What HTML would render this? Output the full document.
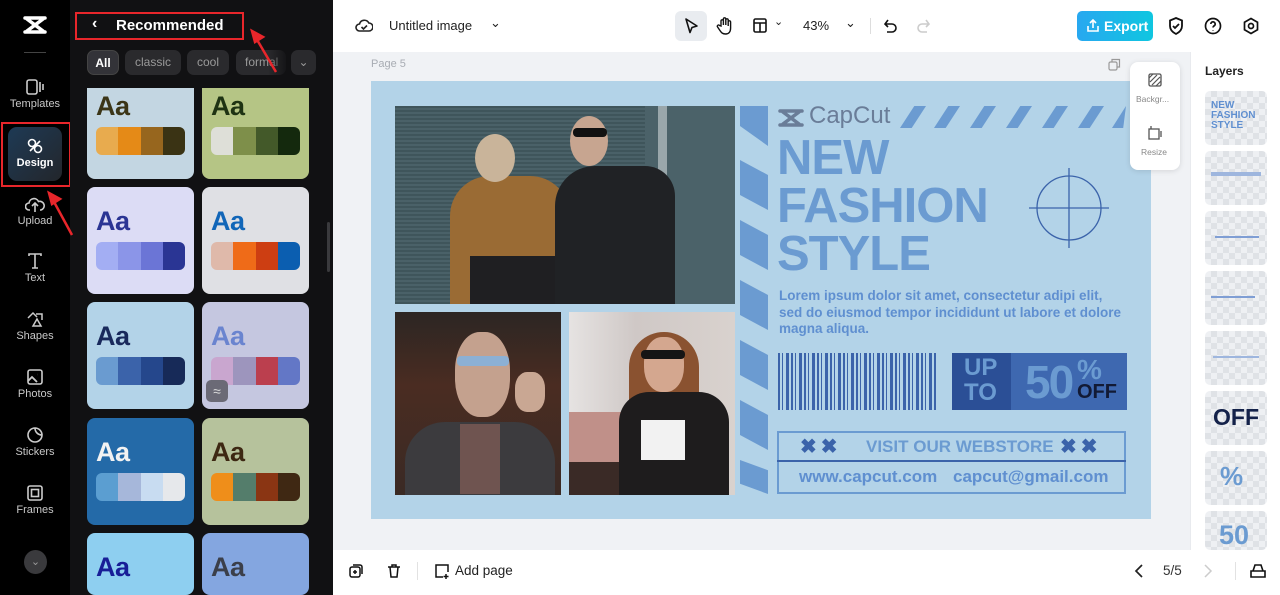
<!DOCTYPE html>
<html><head><meta charset="utf-8"><style>
*{margin:0;padding:0;box-sizing:border-box}
html,body{width:1280px;height:595px;overflow:hidden}
body{font-family:"Liberation Sans",sans-serif;background:#fff;position:relative}
.a{position:absolute}
.rail{left:0;top:0;width:70px;height:595px;background:#000}
.panel{left:70px;top:0;width:263px;height:595px;background:#111113}
.ri{position:absolute;left:0;width:70px;text-align:center;color:#c8c8c8;font-size:11px}
.ri svg{display:block;margin:0 auto 2px}
.chip{position:absolute;top:50px;height:25px;border-radius:7px;background:#2a2a2d;color:#9a9a9a;font-size:12px;line-height:25px;text-align:center}
.card{position:absolute;width:107px;height:107px;border-radius:8px;overflow:hidden}
.card .aa{position:absolute;left:9px;top:19px;font-size:27px;font-weight:bold;letter-spacing:-0.5px}
.card .pal{position:absolute;left:9px;top:55px;width:89px;height:28px;border-radius:6px;overflow:hidden;display:flex}
.card .pal i{flex:1}
.tb{color:#222;font-size:13px}
.stripeV{position:absolute;left:740px;width:28px;height:50px;background:#6b9bd1;clip-path:polygon(0 0,100% 30%,100% 100%,0 70%)}
.stripeT{position:absolute;top:106px;width:26px;height:22px;background:#6b9bd1;clip-path:polygon(55% 0,100% 0,45% 100%,0 100%)}
.lay{position:absolute;left:1205px;width:62px;height:54px;border-radius:5px;background-color:#eef0f3;background-image:linear-gradient(45deg,#dfe2e6 25%,transparent 25%,transparent 75%,#dfe2e6 75%),linear-gradient(45deg,#dfe2e6 25%,transparent 25%,transparent 75%,#dfe2e6 75%);background-size:12px 12px;background-position:0 0,6px 6px;overflow:hidden}
</style></head><body>

<div class="a rail"></div>
<svg class="a" style="left:22px;top:14px" width="26" height="22" viewBox="0 0 26 22"><path d="M3 4h20M3 18h20M5 5l16 12M21 5L5 17" stroke="#fff" stroke-width="3.5" fill="none" stroke-linecap="round"/></svg>
<div class="a" style="left:24px;top:52px;width:22px;height:1px;background:#444"></div>
<div class="ri" style="top:78px"><svg width="20" height="18" viewBox="0 0 20 18"><rect x="2" y="2" width="10" height="14" rx="2" stroke="#ccc" stroke-width="1.6" fill="none"/><path d="M15 4v10M18 6v6" stroke="#ccc" stroke-width="1.6"/></svg>Templates</div>
<div class="a" style="left:8px;top:127px;width:54px;height:54px;border-radius:9px;background:linear-gradient(135deg,#1e3a55,#23262b)"></div>
<div class="a" style="left:1px;top:122px;width:70px;height:65px;border:2px solid #e8262b"></div>
<div class="ri" style="top:137px;color:#fff;font-weight:bold"><svg width="18" height="18" viewBox="0 0 18 18"><circle cx="6" cy="6" r="3.5" stroke="#fff" stroke-width="1.6" fill="none"/><circle cx="12" cy="12" r="3.5" stroke="#fff" stroke-width="1.6" fill="none"/><path d="M4 14L14 4" stroke="#fff" stroke-width="1.6"/></svg>Design</div>
<div class="ri" style="top:196px"><svg width="20" height="17" viewBox="0 0 20 17"><path d="M5 14H4a3.5 3.5 0 010-7 5 5 0 019.5-1.5A4 4 0 0116 14h-1M10 16V8M7 10l3-3 3 3" stroke="#ccc" stroke-width="1.6" fill="none"/></svg>Upload</div>
<div class="ri" style="top:252px"><svg width="18" height="18" viewBox="0 0 18 18"><path d="M3 4V2h12v2M9 2v14M6 16h6" stroke="#ccc" stroke-width="1.6" fill="none"/></svg>Text</div>
<div class="ri" style="top:310px"><svg width="18" height="18" viewBox="0 0 18 18"><path d="M2 8l5-5 4 4M10 4h6v6M7 16l4-7 4 7z" stroke="#ccc" stroke-width="1.5" fill="none"/></svg>Shapes</div>
<div class="ri" style="top:368px"><svg width="18" height="18" viewBox="0 0 18 18"><rect x="2" y="2" width="14" height="14" rx="2" stroke="#ccc" stroke-width="1.6" fill="none"/><path d="M2 13l4-4 5 5M11 6.5h.1" stroke="#ccc" stroke-width="1.8" fill="none"/></svg>Photos</div>
<div class="ri" style="top:426px"><svg width="18" height="18" viewBox="0 0 18 18"><path d="M16 9a7 7 0 11-7-7c0 4 3 7 7 7zM9 2a7 7 0 017 7" stroke="#ccc" stroke-width="1.6" fill="none"/></svg>Stickers</div>
<div class="ri" style="top:484px"><svg width="18" height="18" viewBox="0 0 18 18"><rect x="2" y="2" width="14" height="14" rx="2" stroke="#ccc" stroke-width="1.6" fill="none"/><rect x="5.5" y="5.5" width="7" height="7" stroke="#ccc" stroke-width="1.6" fill="none"/></svg>Frames</div>
<div class="a" style="left:24px;top:550px;width:23px;height:24px;border-radius:50%;background:#3a3a3d;color:#999;font-size:11px;text-align:center;line-height:24px">⌄</div>

<div class="a panel"></div>
<div class="a" style="left:75px;top:12px;width:169px;height:28px;border:2px solid #e8262b"></div>
<div class="a" style="left:92px;top:15px;color:#fff;font-size:16px;font-weight:bold">‹</div>
<div class="a" style="left:116px;top:17px;color:#fff;font-size:15px;font-weight:bold">Recommended</div>
<div class="chip" style="left:87px;width:32px;background:#333338;color:#fff;font-weight:bold;border:1px solid #444">All</div>
<div class="chip" style="left:125px;width:56px">classic</div>
<div class="chip" style="left:187px;width:42px">cool</div>
<div class="chip" style="left:236px;width:50px;overflow:hidden;text-align:left;padding-left:9px">formal</div>
<div class="a" style="left:268px;top:50px;width:22px;height:25px;background:linear-gradient(90deg,rgba(17,17,19,0),#111113)"></div>
<div class="chip" style="left:291px;width:25px">⌄</div>

<div class="a" style="left:70px;top:88px;width:263px;height:507px;overflow:hidden">
 <div class="card" style="left:17px;top:-16px;background:#c3d6e2"><div class="aa" style="color:#3b3517">Aa</div><div class="pal"><i style="background:#e8ab4e"></i><i style="background:#e58a17"></i><i style="background:#97661e"></i><i style="background:#3a3314"></i></div></div>
 <div class="card" style="left:132px;top:-16px;background:#b5c585"><div class="aa" style="color:#1e3313">Aa</div><div class="pal"><i style="background:#dedfd8"></i><i style="background:#7e8f4a"></i><i style="background:#435929"></i><i style="background:#14290d"></i></div></div>
 <div class="card" style="left:17px;top:99px;background:#dcdcf5"><div class="aa" style="color:#2b3594">Aa</div><div class="pal"><i style="background:#a3aef3"></i><i style="background:#8b95e8"></i><i style="background:#6b75d6"></i><i style="background:#2a3594"></i></div></div>
 <div class="card" style="left:132px;top:99px;background:#dfe0e4"><div class="aa" style="color:#1166b8">Aa</div><div class="pal"><i style="background:#dfb9aa"></i><i style="background:#ef6b18"></i><i style="background:#cd3e12"></i><i style="background:#0b5eb0"></i></div></div>
 <div class="card" style="left:17px;top:214px;background:#b3d3e8"><div class="aa" style="color:#19295c">Aa</div><div class="pal"><i style="background:#6a9bd0"></i><i style="background:#3b63aa"></i><i style="background:#25478c"></i><i style="background:#172a58"></i></div></div>
 <div class="card" style="left:132px;top:214px;background:#c5c7e0"><div class="aa" style="color:#6a84cf">Aa</div><div class="pal"><i style="background:#c9a6cf"></i><i style="background:#9d95bd"></i><i style="background:#bb3f4e"></i><i style="background:#6377c6"></i></div><div style="position:absolute;left:4px;top:78px;width:22px;height:22px;border-radius:5px;background:#6b6a76;color:#ddd;font-size:14px;text-align:center;line-height:22px">≈</div></div>
 <div class="card" style="left:17px;top:330px;background:#246aa8"><div class="aa" style="color:#f2f2f2">Aa</div><div class="pal"><i style="background:#5b9ed1"></i><i style="background:#a6b7da"></i><i style="background:#c8dcf1"></i><i style="background:#e6e8eb"></i></div></div>
 <div class="card" style="left:132px;top:330px;background:#b6c29c"><div class="aa" style="color:#3d2813">Aa</div><div class="pal"><i style="background:#ef8e1a"></i><i style="background:#547d6b"></i><i style="background:#8a3513"></i><i style="background:#3f2813"></i></div></div>
 <div class="card" style="left:17px;top:445px;height:62px;background:#8ecff0"><div class="aa" style="color:#181e97">Aa</div></div>
 <div class="card" style="left:132px;top:445px;height:62px;background:#84a6e0"><div class="aa" style="color:#3b3f4a">Aa</div></div>
</div>
<div class="a" style="left:327px;top:222px;width:3px;height:50px;border-radius:2px;background:#3a3a3d"></div>
<div class="a" style="left:333px;top:275px;width:7px;height:46px;background:#1c1c1e;border-radius:0 4px 4px 0"></div>

<svg class="a" style="left:0;top:0" width="340" height="300"><g stroke="#e8262b" stroke-width="2.5" fill="#e8262b"><path d="M276 72L256 38"/><path d="M252 31l11 6-8 5z"/><path d="M72 235L53 200"/><path d="M49 193l11 6-8 5z"/></g></svg>

<svg class="a" style="left:355px;top:17px" width="18" height="17" viewBox="0 0 18 17"><path d="M5 14H4.5a3.5 3.5 0 010-7 5 5 0 019.3-1A4 4 0 0114 14zM6.5 10l2 2 3.5-3.5" stroke="#222" stroke-width="1.6" fill="none"/></svg>
<div class="a tb" style="left:389px;top:18px">Untitled image</div>
<div class="a tb" style="left:490px;top:15px">⌄</div>
<div class="a" style="left:675px;top:11px;width:32px;height:30px;border-radius:6px;background:#e9ecf0"></div>
<svg class="a" style="left:683px;top:17px" width="16" height="18" viewBox="0 0 16 18"><path d="M3 2l11 7-5 1.5-2 5z" stroke="#111" stroke-width="1.6" fill="none" stroke-linejoin="round"/></svg>
<svg class="a" style="left:716px;top:16px" width="18" height="19" viewBox="0 0 18 19"><path d="M5 10V5a1.2 1.2 0 012.4 0v4V3a1.2 1.2 0 012.4 0v6V4a1.2 1.2 0 012.4 0v6V6a1.2 1.2 0 012.4 0v6c0 4-2 6-5 6s-4-1-6-4l-2-3a1.2 1.2 0 012-1.5z" stroke="#111" stroke-width="1.4" fill="none"/></svg>
<svg class="a" style="left:752px;top:17px" width="16" height="17" viewBox="0 0 16 17"><rect x="2" y="2" width="12" height="13" rx="1.5" stroke="#111" stroke-width="1.6" fill="none"/><path d="M2 6h12M8 6v9" stroke="#111" stroke-width="1.6"/></svg>
<div class="a tb" style="left:774px;top:15px;font-size:11px">⌄</div>
<div class="a tb" style="left:803px;top:18px">43%</div>
<div class="a tb" style="left:845px;top:15px">⌄</div>
<div class="a" style="left:870px;top:18px;width:1px;height:16px;background:#ddd"></div>
<svg class="a" style="left:882px;top:17px" width="16" height="17" viewBox="0 0 16 17"><path d="M4 7h6a4 4 0 010 8H5M6 3L3 7l3 3" stroke="#111" stroke-width="1.6" fill="none"/></svg>
<svg class="a" style="left:916px;top:17px" width="16" height="17" viewBox="0 0 16 17"><path d="M12 7H6a4 4 0 000 8h5M10 3l3 4-3 3" stroke="#ccc" stroke-width="1.6" fill="none"/></svg>
<div class="a" style="left:1077px;top:11px;width:76px;height:30px;border-radius:5px;background:linear-gradient(90deg,#28a8f0,#0fc6e0);color:#fff;font-size:14px;font-weight:bold;line-height:30px;padding-left:27px">Export</div>
<svg class="a" style="left:1086px;top:18px" width="14" height="15" viewBox="0 0 14 15"><path d="M7 10V2M4 5l3-3 3 3M2 8v5h10V8" stroke="#fff" stroke-width="1.6" fill="none"/></svg>
<svg class="a" style="left:1167px;top:16px" width="18" height="20" viewBox="0 0 18 20"><path d="M9 2l6 2.5V10c0 4-3 6.5-6 8-3-1.5-6-4-6-8V4.5z" stroke="#111" stroke-width="1.8" fill="none"/><path d="M6 10l2 2 4-4" stroke="#111" stroke-width="1.8" fill="none"/></svg>
<svg class="a" style="left:1204px;top:17px" width="18" height="18" viewBox="0 0 18 18"><circle cx="9" cy="9" r="7.5" stroke="#111" stroke-width="1.7" fill="none"/><path d="M6.8 7a2.2 2.2 0 114 1.3c-.8.6-1.8 1-1.8 2.2M9 13v.5" stroke="#111" stroke-width="1.7" fill="none"/></svg>
<svg class="a" style="left:1242px;top:17px" width="18" height="18" viewBox="0 0 18 18"><path d="M9 1.5l6.5 3.75v7.5L9 16.5l-6.5-3.75v-7.5z" stroke="#111" stroke-width="1.7" fill="none"/><circle cx="9" cy="9" r="2.5" stroke="#111" stroke-width="1.7" fill="none"/></svg>

<div class="a" style="left:333px;top:52px;width:857px;height:498px;background:#f0f2f5"></div>
<div class="a" style="left:371px;top:58px;color:#a8acb3;font-size:11px">Page 5</div>
<svg class="a" style="left:1108px;top:58px" width="13" height="13" viewBox="0 0 13 13"><rect x="1" y="4" width="8" height="8" rx="1.5" stroke="#999" stroke-width="1.2" fill="none"/><path d="M4 4V1.5h7.5V9H9" stroke="#999" stroke-width="1.2" fill="none"/></svg>

<div class="a" style="left:371px;top:81px;width:780px;height:438px;background:#b3d3e8"></div>
<div class="a" style="left:395px;top:106px;width:340px;height:198px;background:repeating-linear-gradient(180deg,#3f555b 0 2px,#4a6168 2px 4px);overflow:hidden">
 <div style="position:absolute;left:250px;top:0;width:90px;height:198px;background:#4b6269"></div>
 <div style="position:absolute;left:263px;top:0;width:9px;height:160px;background:#9aa7ab"></div>
 <div style="position:absolute;left:55px;top:70px;width:120px;height:128px;background:#9a6b34;border-radius:40px 40px 0 0"></div>
 <div style="position:absolute;left:75px;top:150px;width:100px;height:48px;background:#1f1f22"></div>
 <div style="position:absolute;left:80px;top:28px;width:40px;height:48px;background:#c9b49a;border-radius:50%"></div>
 <div style="position:absolute;left:160px;top:60px;width:120px;height:138px;background:#202225;border-radius:40px 30px 0 0"></div>
 <div style="position:absolute;left:175px;top:10px;width:38px;height:50px;background:#c7a590;border-radius:50%"></div>
 <div style="position:absolute;left:178px;top:22px;width:34px;height:9px;background:#111;border-radius:4px"></div>
</div>
<div class="a" style="left:395px;top:312px;width:166px;height:183px;background:linear-gradient(180deg,#2c2623,#4a2c22 40%,#3a2a24);overflow:hidden">
 <div style="position:absolute;left:10px;top:110px;width:150px;height:80px;background:#3c3b3e;border-radius:40px 40px 0 0"></div>
 <div style="position:absolute;left:65px;top:112px;width:40px;height:70px;background:#6f5450"></div>
 <div style="position:absolute;left:60px;top:20px;width:55px;height:85px;background:#c4a18e;border-radius:45%"></div>
 <div style="position:absolute;left:62px;top:44px;width:52px;height:10px;background:#8cb0d4;border-radius:4px"></div>
 <div style="position:absolute;left:120px;top:60px;width:30px;height:40px;background:#c9a793;border-radius:40%"></div>
</div>
<div class="a" style="left:569px;top:312px;width:166px;height:183px;background:linear-gradient(90deg,#e6e3e2,#cfc8c6 40%,#d9d2ce);overflow:hidden">
 <div style="position:absolute;left:0;top:100px;width:60px;height:60px;background:#c09089"></div>
 <div style="position:absolute;left:0;top:150px;width:70px;height:33px;background:#3a2a26"></div>
 <div style="position:absolute;left:60px;top:20px;width:70px;height:140px;background:#8a5230;border-radius:35px 35px 10px 10px"></div>
 <div style="position:absolute;left:50px;top:80px;width:110px;height:103px;background:#1e1c1d;border-radius:30px 30px 0 0"></div>
 <div style="position:absolute;left:75px;top:25px;width:40px;height:55px;background:#d4a78f;border-radius:45%"></div>
 <div style="position:absolute;left:72px;top:38px;width:44px;height:9px;background:#151515;border-radius:4px"></div>
 <div style="position:absolute;left:72px;top:108px;width:44px;height:40px;background:#f2f2f2"></div>
</div>
<div class="stripeV" style="top:106px;height:40px;clip-path:polygon(0 0,100% 0,100% 100%,0 50%)"></div>
<div class="stripeV" style="top:160px"></div>
<div class="stripeV" style="top:220px"></div>
<div class="stripeV" style="top:280px"></div>
<div class="stripeV" style="top:340px"></div>
<div class="stripeV" style="top:400px"></div>
<div class="stripeV" style="top:460px;height:34px"></div>
<div class="stripeT" style="left:900px"></div><div class="stripeT" style="left:934px"></div><div class="stripeT" style="left:970px"></div><div class="stripeT" style="left:1006px"></div><div class="stripeT" style="left:1042px"></div><div class="stripeT" style="left:1078px"></div><div class="stripeT" style="left:1112px;width:14px;clip-path:polygon(100% 0,100% 0,80% 100%,0 100%)"></div>
<svg class="a" style="left:777px;top:107px" width="28" height="22" viewBox="0 0 28 22"><path d="M3 4h22M3 18h22M6 5l16 12M22 5L6 17" stroke="#6a7d98" stroke-width="3.5" fill="none" stroke-linecap="round"/></svg>
<div class="a" style="left:809px;top:102px;color:#6a7d98;font-size:24px">CapCut</div>
<div class="a" style="left:777px;top:134px;color:#6b9bd1;font-size:49px;font-weight:bold;line-height:48px;letter-spacing:-1px">NEW<br>FASHION<br>STYLE</div>
<svg class="a" style="left:1027px;top:166px" width="84" height="84" viewBox="0 0 84 84"><circle cx="42" cy="42" r="32" stroke="#3b63aa" stroke-width="1.3" fill="none"/><path d="M42 2v80M2 42h80" stroke="#3b63aa" stroke-width="1.3"/></svg>
<div class="a" style="left:779px;top:288px;width:345px;color:#5f8fd0;font-size:13.5px;font-weight:bold;line-height:16.5px">Lorem ipsum dolor sit amet, consectetur adipi elit, sed do eiusmod tempor incididunt ut labore et dolore magna aliqua.</div>
<div class="a" style="left:778px;top:353px;width:160px;height:57px;background:repeating-linear-gradient(90deg,#3b63aa 0 2px,transparent 2px 4px,#3b63aa 4px 5px,transparent 5px 8px,#3b63aa 8px 11px,transparent 11px 13px)"></div>
<div class="a" style="left:952px;top:353px;width:59px;height:57px;background:#2b4f96"></div>
<div class="a" style="left:1011px;top:353px;width:116px;height:57px;background:#3e68b0"></div>
<div class="a" style="left:964px;top:355px;color:#6b9bd1;font-size:24px;font-weight:bold;line-height:25px">UP<br>TO</div>
<div class="a" style="left:1025px;top:356px;color:#6b9bd1;font-size:46px;font-weight:bold;line-height:52px;letter-spacing:-2px">50</div>
<div class="a" style="left:1077px;top:354px;color:#6b9bd1;font-size:28px;font-weight:bold">%</div>
<div class="a" style="left:1077px;top:381px;color:#121a35;font-size:20px;font-weight:bold">OFF</div>
<div class="a" style="left:777px;top:431px;width:349px;height:63px;border:2px solid #6b9bd1"></div>
<div class="a" style="left:777px;top:460px;width:349px;height:2px;background:#3b63aa"></div>
<div class="a" style="left:800px;top:434px;color:#3b63aa;font-size:20px;font-weight:bold;letter-spacing:4px">✖✖</div>
<div class="a" style="left:866px;top:437px;color:#6b9bd1;font-size:17px;font-weight:bold">VISIT OUR WEBSTORE</div>
<div class="a" style="left:1060px;top:434px;color:#3b63aa;font-size:20px;font-weight:bold;letter-spacing:4px">✖✖</div>
<div class="a" style="left:799px;top:467px;color:#5f8fd0;font-size:17px;font-weight:bold">www.capcut.com</div>
<div class="a" style="left:953px;top:467px;color:#5f8fd0;font-size:17px;font-weight:bold">capcut@gmail.com</div>

<div class="a" style="left:1130px;top:62px;width:50px;height:108px;background:#fff;border-radius:8px;box-shadow:0 1px 6px rgba(0,0,0,.12)"></div>
<svg class="a" style="left:1147px;top:72px" width="16" height="16" viewBox="0 0 16 16"><rect x="2" y="2" width="12" height="12" rx="1.5" stroke="#555" stroke-width="1.3" fill="none"/><path d="M3 10l7-7M5 13l8-8M2 6l4-4M9 14l5-5" stroke="#555" stroke-width="1.2"/></svg>
<div class="a" style="left:1136px;top:94px;color:#888;font-size:8.5px">Backgr...</div>
<svg class="a" style="left:1147px;top:125px" width="16" height="16" viewBox="0 0 16 16"><rect x="2" y="4" width="10" height="10" stroke="#555" stroke-width="1.3" fill="none"/><path d="M4 1v3M14 6v6" stroke="#555" stroke-width="1.3"/></svg>
<div class="a" style="left:1141px;top:147px;color:#888;font-size:8.5px">Resize</div>

<div class="a" style="left:1190px;top:52px;width:90px;height:498px;background:#fff;border-left:1px solid #e8eaee"></div>
<div class="a" style="left:1205px;top:64px;color:#222;font-size:12px;font-weight:bold">Layers</div>
<div class="lay" style="top:91px"><div style="position:absolute;left:6px;top:10px;color:#5f8fd0;font-size:10px;font-weight:bold;line-height:10px">NEW<br>FASHION<br>STYLE</div></div>
<div class="lay" style="top:151px"><div style="position:absolute;left:6px;top:21px;width:50px;height:4px;background:#9eb6de"></div></div>
<div class="lay" style="top:211px"><div style="position:absolute;left:10px;top:25px;width:44px;height:2px;background:#7f9ed4"></div></div>
<div class="lay" style="top:271px"><div style="position:absolute;left:6px;top:25px;width:44px;height:2px;background:#7f9ed4"></div></div>
<div class="lay" style="top:331px"><div style="position:absolute;left:8px;top:25px;width:46px;height:2px;background:#9eb6de"></div></div>
<div class="lay" style="top:391px"><div style="position:absolute;left:8px;top:13px;color:#14224a;font-size:23px;font-weight:bold">OFF</div></div>
<div class="lay" style="top:451px"><div style="position:absolute;left:15px;top:10px;color:#6b9bd1;font-size:26px;font-weight:bold">%</div></div>
<div class="lay" style="top:511px;height:39px"><div style="position:absolute;left:14px;top:9px;color:#6b9bd1;font-size:27px;font-weight:bold">50</div></div>

<div class="a" style="left:333px;top:550px;width:947px;height:45px;background:#fff"></div>
<svg class="a" style="left:348px;top:563px" width="16" height="16" viewBox="0 0 16 16"><rect x="2" y="4" width="10" height="10" rx="2" stroke="#111" stroke-width="1.5" fill="none"/><path d="M5 2h7a2 2 0 012 2v7M7 7v4M5 9h4" stroke="#111" stroke-width="1.5" fill="none"/></svg>
<svg class="a" style="left:386px;top:563px" width="16" height="16" viewBox="0 0 16 16"><path d="M2 4h12M6 4V2h4v2M4 4l1 10h6l1-10" stroke="#111" stroke-width="1.5" fill="none"/></svg>
<div class="a" style="left:417px;top:562px;width:1px;height:18px;background:#e2e2e2"></div>
<svg class="a" style="left:433px;top:562px" width="18" height="18" viewBox="0 0 18 18"><path d="M10 15H3V3h12v7M13 12v5M10.5 14.5h5" stroke="#111" stroke-width="1.5" fill="none"/></svg>
<div class="a" style="left:455px;top:563px;color:#222;font-size:13.5px">Add page</div>
<svg class="a" style="left:1133px;top:563px" width="12" height="16" viewBox="0 0 12 16"><path d="M9 2L3 8l6 6" stroke="#222" stroke-width="1.7" fill="none"/></svg>
<div class="a" style="left:1163px;top:563px;color:#333;font-size:13.5px">5/5</div>
<svg class="a" style="left:1202px;top:563px" width="12" height="16" viewBox="0 0 12 16"><path d="M3 2l6 6-6 6" stroke="#ccc" stroke-width="1.5" fill="none"/></svg>
<div class="a" style="left:1235px;top:562px;width:1px;height:18px;background:#e2e2e2"></div>
<svg class="a" style="left:1249px;top:562px" width="18" height="17" viewBox="0 0 18 17"><path d="M2 9h14v6H2zM4 9l2-6h6l2 6" stroke="#111" stroke-width="1.6" fill="none"/></svg>
</body></html>
